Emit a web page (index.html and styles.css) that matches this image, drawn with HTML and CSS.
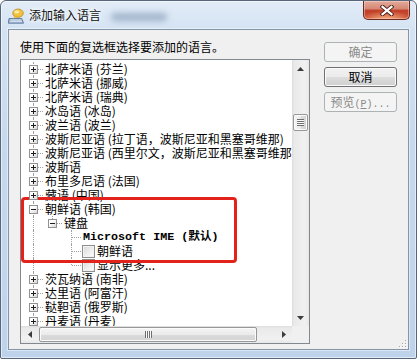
FILE: index.html
```html
<!DOCTYPE html>
<html lang="zh-CN">
<head>
<meta charset="utf-8">
<title>添加输入语言</title>
<link rel="stylesheet" href="styles.css">
</head>
<body>
<div class="window">
  <div class="titlebar">
    <svg class="app-icon" width="16" height="16" viewBox="0 0 16 16">
      <path d="M1 10.5 H13.8 L15.5 15.2 H0.2 Z" fill="#9fb6d0" stroke="#4f6f95" stroke-width="0.8"/>
      <path d="M2.5 12 H13.5 M2.2 13.6 H14" stroke="#e9f0f8" stroke-width="0.8"/>
      <ellipse cx="10" cy="5.2" rx="5.3" ry="4.2" fill="#f0c13c" stroke="#b58a1c" stroke-width="0.7"/>
      <ellipse cx="8.8" cy="3.9" rx="2.6" ry="1.6" fill="#fbe9a6"/>
      <path d="M6 8.5 L5 10.6 L8.5 9" fill="#f0c13c"/>
    </svg>
    <span class="title">添加输入语言</span>
    <span class="blur"></span>
    <button class="close" type="button" aria-label="关闭">
      <svg width="14" height="11" viewBox="0 0 14 11">
        <path d="M2.5 1.8 L11.5 9.2 M11.5 1.8 L2.5 9.2" stroke="#4a1a12" stroke-width="4" stroke-linecap="square"/>
        <path d="M2.5 1.8 L11.5 9.2 M11.5 1.8 L2.5 9.2" stroke="#ffffff" stroke-width="2.2" stroke-linecap="square"/>
      </svg>
    </button>
  </div>

  <div class="client">
    <div class="left">
      <div class="prompt">使用下面的复选框选择要添加的语言。</div>
      <div class="tree">
        <div class="rows">
          <div class="row"><span class="cell v h"><span class="box plus"></span></span><span class="label">北萨米语 (芬兰)</span></div>
          <div class="row"><span class="cell v h"><span class="box plus"></span></span><span class="label">北萨米语 (挪威)</span></div>
          <div class="row"><span class="cell v h"><span class="box plus"></span></span><span class="label">北萨米语 (瑞典)</span></div>
          <div class="row"><span class="cell v h"><span class="box plus"></span></span><span class="label">冰岛语 (冰岛)</span></div>
          <div class="row"><span class="cell v h"><span class="box plus"></span></span><span class="label">波兰语 (波兰)</span></div>
          <div class="row"><span class="cell v h"><span class="box plus"></span></span><span class="label">波斯尼亚语 (拉丁语，波斯尼亚和黑塞哥维那)</span></div>
          <div class="row"><span class="cell v h"><span class="box plus"></span></span><span class="label">波斯尼亚语 (西里尔文，波斯尼亚和黑塞哥维那)</span></div>
          <div class="row"><span class="cell v h"><span class="box plus"></span></span><span class="label">波斯语</span></div>
          <div class="row"><span class="cell v h"><span class="box plus"></span></span><span class="label">布里多尼语 (法国)</span></div>
          <div class="row"><span class="cell v h"><span class="box plus"></span></span><span class="label">藏语 (中国)</span></div>
          <div class="row"><span class="cell v h"><span class="box minus"></span></span><span class="label">朝鲜语 (韩国)</span></div>
          <div class="row"><span class="cell v"></span><span class="cell vt h"><span class="box minus"></span></span><span class="label">键盘</span></div>
          <div class="row"><span class="cell v"></span><span class="cell"></span><span class="cell v h"></span><span class="label ime">Microsoft IME (默认)</span></div>
          <div class="row"><span class="cell v"></span><span class="cell"></span><span class="cell v h"></span><span class="check"></span><span class="label">朝鲜语</span></div>
          <div class="row"><span class="cell v"></span><span class="cell"></span><span class="cell vt h"></span><span class="check"></span><span class="label">显示更多...</span></div>
          <div class="row"><span class="cell v h"><span class="box plus"></span></span><span class="label">茨瓦纳语 (南非)</span></div>
          <div class="row"><span class="cell v h"><span class="box plus"></span></span><span class="label">达里语 (阿富汗)</span></div>
          <div class="row"><span class="cell v h"><span class="box plus"></span></span><span class="label">鞑靼语 (俄罗斯)</span></div>
          <div class="row"><span class="cell v h"><span class="box plus"></span></span><span class="label">丹麦语 (丹麦)</span></div>
        </div>
        <div class="vscroll">
          <div class="sb-btn"><svg width="7" height="4" viewBox="0 0 7 4"><polygon points="0,4 3.5,0 7,4" fill="#3c3c3c"/></svg></div>
          <div class="vtrack"><div class="vthumb"><span class="vgrip"></span></div></div>
          <div class="sb-btn"><svg width="7" height="4" viewBox="0 0 7 4"><polygon points="0,0 7,0 3.5,4" fill="#3c3c3c"/></svg></div>
        </div>
        <div class="hscroll">
          <div class="sb-btn"><svg width="4" height="7" viewBox="0 0 4 7"><polygon points="4,0 4,7 0,3.5" fill="#3c3c3c"/></svg></div>
          <div class="htrack"><div class="hthumb"><span class="hgrip"></span></div></div>
          <div class="sb-btn"><svg width="4" height="7" viewBox="0 0 4 7"><polygon points="0,0 4,3.5 0,7" fill="#3c3c3c"/></svg></div>
        </div>
        <div class="corner"></div>
      </div>
    </div>

    <div class="buttons">
      <button class="btn disabled" type="button">确定</button>
      <button class="btn normal" type="button">取消</button>
      <button class="btn disabled" type="button">预览<span class="half">(<u>P</u>)...</span></button>
    </div>

    <div class="highlight"></div>
    <svg class="sizegrip" width="10" height="10" viewBox="0 0 10 10">
      <g fill="#ffffff"><rect x="9" y="3" width="1" height="1"/><rect x="9" y="6" width="1" height="1"/><rect x="6" y="6" width="1" height="1"/><rect x="9" y="9" width="1" height="1"/><rect x="6" y="9" width="1" height="1"/><rect x="3" y="9" width="1" height="1"/></g>
      <g fill="#a8a8a8"><rect x="8" y="2" width="1" height="1"/><rect x="8" y="5" width="1" height="1"/><rect x="5" y="5" width="1" height="1"/><rect x="8" y="8" width="1" height="1"/><rect x="5" y="8" width="1" height="1"/><rect x="2" y="8" width="1" height="1"/></g>
    </svg>
  </div>
</div>
</body>
</html>
```
FILE: styles.css
```css
* { box-sizing: border-box; }

html, body {
  margin: 0;
  padding: 0;
  background: #ffffff;
}

body {
  font-family: "Noto Sans CJK SC", "Noto Sans", sans-serif;
  font-size: 12px;
  color: #000;
  width: 417px;
  height: 359px;
  overflow: hidden;
}

.window {
  width: 417px;
  height: 359px;
  border: 1px solid #56677b;
  border-radius: 6px 6px 2px 2px;
  background: linear-gradient(to bottom, #e2ecf7 0px, #d4e3f3 28px, #c7d9ee 140px, #bed3eb 359px);
  box-shadow: inset 0 0 0 1px rgba(255, 255, 255, 0.55);
  display: flex;
  flex-direction: column;
}

/* ---------- title bar ---------- */
.titlebar {
  height: 28px;
  flex: none;
  display: flex;
  align-items: center;
  padding-left: 7px;
  padding-right: 6px;
}

.app-icon {
  flex: none;
  margin-top: 1px;
}

.title {
  margin-left: 5px;
  font-size: 12px;
  line-height: 16px;
  color: #111;
  text-shadow: 0 0 6px #fff, 0 0 4px #fff;
  white-space: nowrap;
}

.blur {
  margin-left: 10px;
  margin-top: 4px;
  width: 56px;
  height: 8px;
  border-radius: 4px;
  background: #93a7c1;
  filter: blur(3px);
  opacity: 0.8;
}

.close {
  margin-left: auto;
  align-self: flex-start;
  width: 47px;
  height: 19px;
  padding: 0;
  border: 1px solid #6b2a1e;
  border-top: none;
  border-radius: 0 0 5px 5px;
  background:
    radial-gradient(ellipse 60% 45% at 50% 100%, rgba(255, 190, 140, 0.85), rgba(255, 150, 100, 0) 100%),
    linear-gradient(to bottom, #e3ab9d 0%, #d48672 45%, #c0402a 50%, #c84a2f 100%);
  box-shadow: inset 0 0 0 1px rgba(255, 220, 210, 0.45);
  display: flex;
  align-items: center;
  justify-content: center;
}

/* ---------- client ---------- */
.client {
  position: relative;
  flex: none;
  height: 321px;
  margin: 0 7px;
  border: 1px solid #8495aa;
  background: #f0f0f0;
  box-shadow: 0 0 0 1px rgba(255, 255, 255, 0.45);
  padding: 10px 11px 5px 11px;
  display: flex;
  gap: 14px;
}

.left {
  width: 290px;
  flex: none;
  display: flex;
  flex-direction: column;
}

.prompt {
  line-height: 14px;
  height: 14px;
  white-space: nowrap;
}

/* ---------- tree ---------- */
.tree {
  margin-top: 5px;
  width: 290px;
  height: 285px;
  border: 1px solid #828790;
  background: #fff;
  display: grid;
  grid-template-columns: 271px 17px;
  grid-template-rows: 266px 17px;
}

.rows {
  overflow: hidden;
  padding: 2px 0 0 3px;
}

.row {
  display: flex;
  align-items: center;
  height: 14px;
  white-space: nowrap;
}

.cell {
  position: relative;
  flex: none;
  width: 19px;
  height: 14px;
}

.cell.v::before,
.cell.vt::before {
  content: "";
  position: absolute;
  left: 9px;
  top: 0;
  height: 14px;
  border-left: 1px dotted #a0a0a0;
}

.cell.vt::before {
  height: 7px;
}

.cell.h::after {
  content: "";
  position: absolute;
  left: 10px;
  top: 7px;
  width: 9px;
  border-top: 1px dotted #a0a0a0;
}

.box {
  position: absolute;
  z-index: 1;
  left: 5px;
  top: 3px;
  width: 9px;
  height: 9px;
  border: 1px solid #929292;
  background: linear-gradient(135deg, #ffffff 35%, #d6d6d6 100%);
}

.box::before {
  content: "";
  position: absolute;
  left: 1px;
  top: 3px;
  width: 5px;
  height: 1px;
  background: #1e1e1e;
}

.box.plus::after {
  content: "";
  position: absolute;
  left: 3px;
  top: 1px;
  width: 1px;
  height: 5px;
  background: #1e1e1e;
}

.label {
  flex: none;
  padding: 0 2px;
  line-height: 14px;
  height: 14px;
}

.label.ime {
  font-family: "Liberation Mono", "Noto Sans CJK SC", monospace;
  font-weight: bold;
  font-size: 11.7px;
  padding-top: 1px;
  line-height: 13px;
}

.check {
  flex: none;
  width: 13px;
  height: 13px;
  margin-left: 1px;
  border: 1px solid #8f8f8f;
  background: linear-gradient(135deg, #d8d8d8 0%, #f0f0f0 60%, #ffffff 100%);
  box-shadow: inset 0 0 0 1px #f2f2f2;
}

/* ---------- scrollbars ---------- */
.vscroll {
  display: flex;
  flex-direction: column;
  background: linear-gradient(to right, #dcdcdc 0, #e9e9e9 2px, #f1f1f1 13px, #e7e7e7 17px);
}

.hscroll {
  display: flex;
  background: linear-gradient(to bottom, #dcdcdc 0, #e9e9e9 2px, #f1f1f1 13px, #e7e7e7 17px);
}

.sb-btn {
  flex: none;
  width: 17px;
  height: 17px;
  display: flex;
  align-items: center;
  justify-content: center;
}

.vtrack {
  flex: 1;
}

.htrack {
  flex: 1;
  display: flex;
}

.vthumb {
  margin-top: 37px;
  margin-left: 1px;
  width: 15px;
  height: 17px;
  border: 1px solid #979797;
  border-radius: 2px;
  background: linear-gradient(to right, #f4f4f4 0%, #ebebeb 50%, #dbdbdb 51%, #d4d4d4 100%);
  box-shadow: inset 0 0 0 1px #fbfbfb;
  display: flex;
  align-items: center;
  justify-content: center;
}

.vgrip {
  width: 7px;
  height: 7px;
  background: repeating-linear-gradient(to bottom, #6e6e6e 0 1px, #fafafa 1px 2px);
}

.hthumb {
  margin-left: 1px;
  margin-top: 1px;
  width: 218px;
  height: 15px;
  border: 1px solid #979797;
  border-radius: 2px;
  background: linear-gradient(to bottom, #f4f4f4 0%, #ebebeb 50%, #dbdbdb 51%, #d4d4d4 100%);
  box-shadow: inset 0 0 0 1px #fbfbfb;
  display: flex;
  align-items: center;
  justify-content: center;
}

.hgrip {
  width: 7px;
  height: 7px;
  background: repeating-linear-gradient(to right, #6e6e6e 0 1px, #fafafa 1px 2px);
}

.corner {
  background: #f0f0f0;
}

/* ---------- buttons ---------- */
.buttons {
  width: 73px;
  flex: none;
  margin-top: 2px;
  display: flex;
  flex-direction: column;
  gap: 5px;
}

.btn {
  width: 73px;
  height: 20px;
  padding: 0;
  border-radius: 3px;
  font-family: "Noto Sans CJK SC", sans-serif;
  font-size: 12px;
  line-height: 18px;
  text-align: center;
  white-space: nowrap;
}

.btn.disabled {
  border: 1px solid #adb2b5;
  background: #f4f4f4;
  color: #8a8a8a;
}

.btn.normal {
  border: 1px solid #707070;
  background: linear-gradient(to bottom, #f2f2f2 0%, #ebebeb 48%, #dddddd 52%, #cfcfcf 100%);
  box-shadow: inset 0 0 0 1px #fbfbfb;
  color: #000;
}

.half {
  font-family: "Liberation Mono", monospace;
  font-size: 10px;
}

/* ---------- annotation overlay ---------- */
.highlight {
  position: absolute;
  left: 12px;
  top: 167px;
  width: 216px;
  height: 66px;
  border: 3px solid #e3221c;
  border-radius: 4px;
  pointer-events: none;
}

.sizegrip {
  position: absolute;
  right: 1px;
  bottom: 1px;
}
```
